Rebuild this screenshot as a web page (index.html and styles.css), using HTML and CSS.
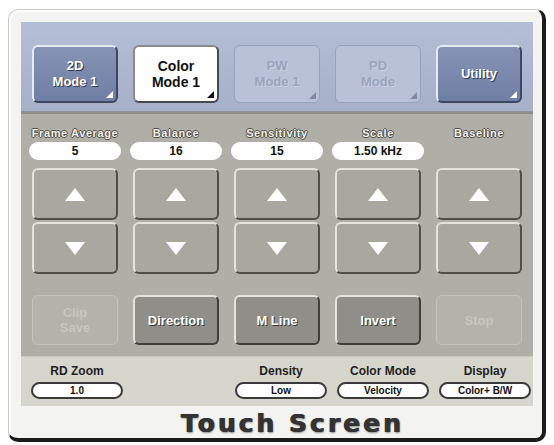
FILE: index.html
```html
<!DOCTYPE html>
<html lang="en">
<head>
    <meta charset="UTF-8">
    <meta name="viewport" content="width=device-width, initial-scale=1.0">
    <title>Touch Screen</title>
    <link rel="stylesheet" href="styles.css">
</head>
<body>
    <div class="frame">
        <div class="panel">
            <!-- mode selection row -->
            <div class="modes">
                <button class="mode">2D<br>Mode 1<span class="corner"></span></button>
                <button class="mode active">Color<br>Mode 1<span class="corner"></span></button>
                <button class="mode disabled">PW<br>Mode 1<span class="corner"></span></button>
                <button class="mode disabled">PD<br>Mode<span class="corner"></span></button>
                <button class="mode">Utility<span class="corner"></span></button>
            </div>

            <div class="controls">
                <div class="params">
                    <div class="param">
                        <div class="label">Frame Average</div>
                        <div class="value">5</div>
                    </div>
                    <div class="param">
                        <div class="label">Balance</div>
                        <div class="value">16</div>
                    </div>
                    <div class="param">
                        <div class="label">Sensitivity</div>
                        <div class="value">15</div>
                    </div>
                    <div class="param">
                        <div class="label">Scale</div>
                        <div class="value">1.50 kHz</div>
                    </div>
                    <div class="param">
                        <div class="label">Baseline</div>
                    </div>
                </div>

                <div class="steppers">
                    <button class="step"><span class="arrow up"></span></button>
                    <button class="step"><span class="arrow up"></span></button>
                    <button class="step"><span class="arrow up"></span></button>
                    <button class="step"><span class="arrow up"></span></button>
                    <button class="step"><span class="arrow up"></span></button>
                    <button class="step"><span class="arrow down"></span></button>
                    <button class="step"><span class="arrow down"></span></button>
                    <button class="step"><span class="arrow down"></span></button>
                    <button class="step"><span class="arrow down"></span></button>
                    <button class="step"><span class="arrow down"></span></button>
                </div>

                <div class="actions">
                    <button class="action disabled">Clip<br>Save</button>
                    <button class="action">Direction</button>
                    <button class="action">M Line</button>
                    <button class="action">Invert</button>
                    <button class="action disabled">Stop</button>
                </div>
            </div>

            <div class="settings">
                <div class="setting">
                    <div class="setting-label">RD Zoom</div>
                    <div class="setting-value">1.0</div>
                </div>
                <div class="setting"></div>
                <div class="setting">
                    <div class="setting-label">Density</div>
                    <div class="setting-value">Low</div>
                </div>
                <div class="setting">
                    <div class="setting-label">Color Mode</div>
                    <div class="setting-value">Velocity</div>
                </div>
                <div class="setting">
                    <div class="setting-label">Display</div>
                    <div class="setting-value">Color+ B/W</div>
                </div>
            </div>
        </div>
        <div class="title">Touch Screen</div>
    </div>
</body>
</html>
```

FILE: styles.css
```css
* {
    box-sizing: border-box;
    margin: 0;
    padding: 0;
}

body {
    font-family: "Liberation Sans", Arial, sans-serif;
    background-color: #ffffff;
    padding: 9px 0 0 8px;
}

button {
    font-family: inherit;
    cursor: pointer;
}

.frame {
    width: 538px;
    height: 433px;
    background-color: #f3f3f1;
    border-radius: 10px;
    border-top: 1px solid #c9c9c6;
    border-left: 1px solid #c9c9c6;
    border-right: 4px solid #1c1c1c;
    border-bottom: 4px solid #1c1c1c;
    padding: 12px 9px 0 12px;
    box-shadow: inset 2px 2px 0 #ffffff;
}

.panel {
    width: 512px;
}

/* top row of mode buttons */
.modes {
    display: grid;
    grid-template-columns: repeat(5, 86px);
    column-gap: 15px;
    height: 90px;
    padding: 23px 0 0 11px;
    background: linear-gradient(#b4bed4, #a5b0c9);
    border-bottom: 1px solid #8d93a0;
}

.mode {
    position: relative;
    height: 58px;
    border-radius: 6px;
    background: linear-gradient(#8593b6, #6f7ea3);
    border: 2px solid #e6eaf3;
    border-right-color: #3e475f;
    border-bottom-color: #3e475f;
    color: #ffffff;
    font-weight: bold;
    font-size: 13px;
    line-height: 16px;
    text-shadow: 1px 1px 0 #2f3750;
}

.mode.active {
    background: #ffffff;
    border-color: #4a4a4a;
    border-top-color: #8a8a8a;
    border-left-color: #8a8a8a;
    color: #111111;
    font-size: 14px;
    text-shadow: none;
}

.mode.disabled {
    background: #b8c1d6;
    border: 1px solid #98a2ba;
    color: #9ba4bc;
    text-shadow: 1px 1px 0 #c9d0e0;
}

.corner {
    position: absolute;
    right: 3px;
    bottom: 3px;
    width: 0;
    height: 0;
    border-left: 7px solid transparent;
    border-bottom: 7px solid #ffffff;
}

.mode.active .corner {
    border-bottom-color: #111111;
}

.mode.disabled .corner {
    border-bottom-color: #7f889f;
}

/* grey control area */
.controls {
    height: 245px;
    background-color: #afaea7;
    border-top: 2px solid #8e8d88;
    border-bottom: 1px solid #c9c8c0;
    padding: 12px 11px 0 11px;
}

.params {
    display: grid;
    grid-template-columns: repeat(5, 86px);
    column-gap: 15px;
    height: 42px;
}

.param {
    display: flex;
    flex-direction: column;
    align-items: center;
}

.label {
    font-size: 11px;
    font-weight: bold;
    line-height: 14px;
    color: #f2f2ee;
    text-shadow: 1px 0 0 #4e4d48, -1px 0 0 #4e4d48, 0 1px 0 #4e4d48, 0 -1px 0 #4e4d48;
    letter-spacing: 0.6px;
    white-space: nowrap;
}

.value {
    width: 92px;
    height: 18px;
    margin-top: 2px;
    background-color: #ffffff;
    border-radius: 9px;
    text-align: center;
    font-size: 12px;
    font-weight: bold;
    line-height: 18px;
    color: #111111;
}

.steppers {
    display: grid;
    grid-template-columns: repeat(5, 86px);
    grid-auto-rows: 52px;
    column-gap: 15px;
    row-gap: 2px;
}

.step {
    display: flex;
    align-items: center;
    justify-content: center;
    border-radius: 6px;
    background-color: #a9a89f;
    border: 2px solid #e4e3dc;
    border-right-color: #4f4e48;
    border-bottom-color: #4f4e48;
}

.arrow {
    width: 0;
    height: 0;
    border-left: 10px solid transparent;
    border-right: 10px solid transparent;
}

.arrow.up {
    border-bottom: 13px solid #ffffff;
}

.arrow.down {
    border-top: 13px solid #ffffff;
}

.actions {
    display: grid;
    grid-template-columns: repeat(5, 86px);
    column-gap: 15px;
    height: 50px;
    margin-top: 21px;
}

.action {
    border-radius: 6px;
    background-color: #8f8e88;
    border: 2px solid #e4e3dc;
    border-right-color: #3f3e3a;
    border-bottom-color: #3f3e3a;
    color: #ffffff;
    font-size: 13px;
    font-weight: bold;
    line-height: 15px;
    text-shadow: 1px 1px 0 #3a3935;
}

.action.disabled {
    background-color: #b3b2ab;
    border: 1px solid #c4c3bc;
    color: #c7c6bf;
    text-shadow: none;
}

/* lower strip of current settings */
.settings {
    display: grid;
    grid-template-columns: repeat(5, 92px);
    column-gap: 10px;
    height: 49px;
    padding: 7px 0 0 10px;
    background-color: #d7d6cd;
}

.setting {
    display: flex;
    flex-direction: column;
    align-items: center;
}

.setting-label {
    font-size: 12px;
    font-weight: bold;
    line-height: 15px;
    color: #1e1e1e;
}

.setting-value {
    width: 92px;
    height: 17px;
    margin-top: 3px;
    background-color: #ffffff;
    border: 2px solid #3a3a3a;
    border-radius: 9px;
    text-align: center;
    font-size: 10px;
    font-weight: bold;
    line-height: 13px;
    color: #111111;
}

.title {
    text-align: center;
    padding-top: 5px;
    padding-left: 30px;
    font-family: "DejaVu Sans", sans-serif;
    font-size: 25px;
    font-weight: bold;
    letter-spacing: 3px;
    line-height: 26px;
    color: #333333;
    text-shadow: 1px 0 0 #333333, 1px 1px 2px #8a8a8a;
}
```
